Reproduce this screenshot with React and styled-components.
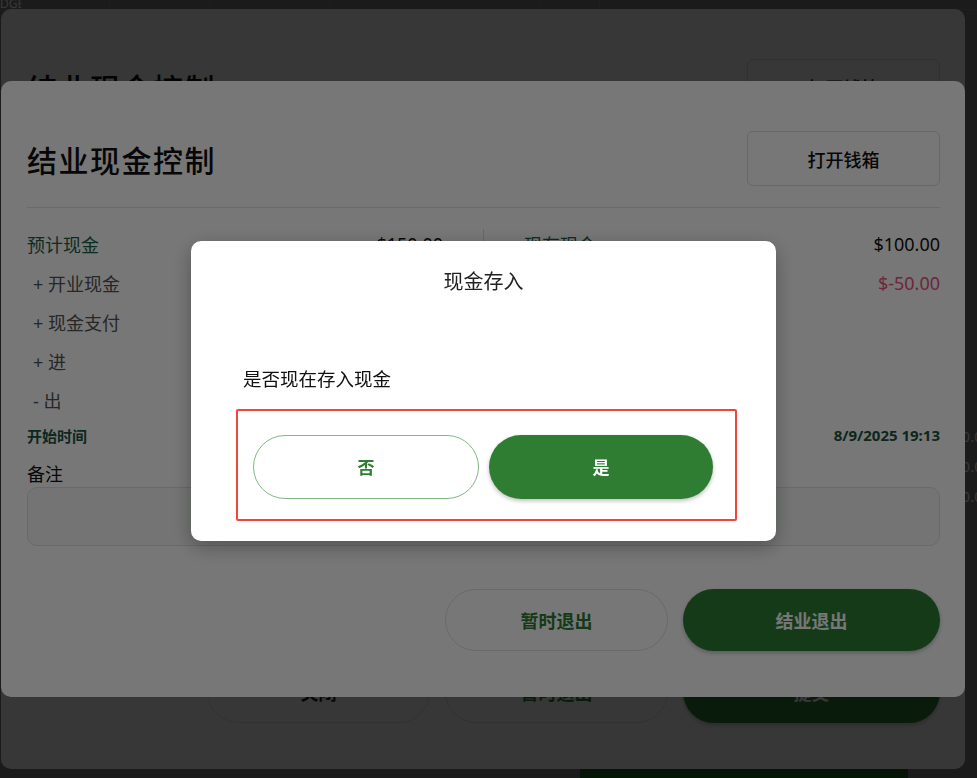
import React from 'react'
import styled, { createGlobalStyle, css } from 'styled-components'

const GlobalStyle = createGlobalStyle`
  html, body {
    margin: 0;
    padding: 0;
    height: 100%;
    overflow: hidden;
  }
  body {
    font-family: "Noto Sans", "Noto Sans CJK SC", sans-serif;
  }
  * {
    box-sizing: border-box;
  }
`;

/* ---------- page behind the modals ---------- */

const Page = styled.div`
  height: 100vh;
  background: #7c7c7c;
  color: #fff;
  display: flex;
  flex-direction: column;
`;

const TableHead = styled.div`
  display: flex;
  height: 10px;
  font-size: 12px;
  line-height: 8px;
  border-bottom: 1px solid #8a8a8a;
`;

const HeadCell = styled.div`
  width: ${p => p.$w}px;
  border-right: 1px solid #8e8e8e;
  overflow: hidden;
  white-space: nowrap;
`;

const PageBody = styled.div`
  flex: 1;
  display: flex;
  justify-content: flex-end;
`;

const SideList = styled.div`
  width: 37px;
  padding: 411px 0 0 12px;
  border-left: 1px solid #8a8a8a;
  font-size: 15px;
`;

const SideValue = styled.div`
  height: 30px;
  line-height: 30px;
  white-space: nowrap;
`;

const PageFooter = styled.div`
  height: 10px;
  display: flex;
  justify-content: flex-end;
  padding-right: 69px;
`;

const PayBar = styled.div`
  width: 328px;
  background: #1b5e20;
`;

/* ---------- modal layers ---------- */

const Layer = styled.div`
  position: fixed;
  inset: 0;
  display: flex;
  align-items: center;
  justify-content: center;
  padding-right: ${p => (p.$gutter ? p.$gutter : 11)}px;
  background: ${p => (p.$dim ? 'rgba(0, 0, 0, 0.533)' : 'transparent')};
`;

const Modal = styled.div`
  width: 964px;
  height: ${p => p.$height}px;
  background: #fff;
  border-radius: 10px;
  padding: 50px 25px 46px 26px;
  display: flex;
  flex-direction: column;
`;

const Header = styled.div`
  display: flex;
  align-items: center;
  justify-content: space-between;
  padding-bottom: 21px;
  border-bottom: 1px solid #e4e4e4;
`;

const Title = styled.h1`
  margin: 0;
  font-size: 30px;
  font-weight: 500;
  letter-spacing: 1.5px;
  color: #111;
`;

const DrawerButton = styled.button`
  width: 193px;
  height: 55px;
  border: 1px solid #dedede;
  border-radius: 6px;
  background: #fff;
  font-family: inherit;
  font-size: 18px;
  font-weight: 500;
  color: #111;
`;

const Summary = styled.div`
  display: grid;
  grid-template-columns: 1fr 1px 1fr;
  column-gap: 40px;
  padding-top: 16px;
`;

const Column = styled.div`
  display: flex;
  flex-direction: column;
`;

const VRule = styled.div`
  margin-top: 5px;
  background: #dcdcdc;
`;

const Row = styled.div`
  height: 39px;
  display: flex;
  align-items: center;
  justify-content: space-between;
  font-size: 18px;
  padding-left: ${p => (p.$indent ? '6px' : '0')};
  color: ${p => (p.$accent ? '#1f6048' : '#555')};
`;

const Amount = styled.span`
  color: ${p => (p.$negative ? '#e8537f' : '#111')};
`;

const TimeRow = styled.div`
  height: 32px;
  display: flex;
  align-items: center;
  justify-content: space-between;
  font-size: 15px;
  font-weight: 700;
  color: #1d5442;
`;

const NoteLabel = styled.div`
  margin-top: 10px;
  font-size: 18px;
  line-height: 26px;
  color: #111;
`;

const NoteBox = styled.div`
  height: 59px;
  border: 1px solid #e2e2e2;
  border-radius: 10px;
  background: #f6f9f6;
`;

const Footer = styled.div`
  margin-top: auto;
  display: flex;
  justify-content: flex-end;
  gap: 15px;
`;

const PillButton = styled.button`
  width: ${p => p.$w}px;
  height: 62px;
  border-radius: 31px;
  font-family: inherit;
  font-size: 18px;
  font-weight: 700;
  ${p =>
    p.$solid
      ? css`
          border: none;
          background: #2e7d32;
          color: #fff;
          box-shadow: 0 2px 4px rgba(0, 0, 0, 0.25);
        `
      : css`
          border: 1px solid #e2e2e2;
          background: #fff;
          color: ${p.$plain ? '#222' : '#2e7d32'};
        `}
`;

/* ---------- confirm dialog ---------- */

const Dialog = styled.div`
  width: 585px;
  background: #fff;
  border-radius: 10px;
  padding: 28px 39px 20px 45px;
  margin-top: 3px;
  box-shadow: 0 6px 20px rgba(0, 0, 0, 0.3);
`;

const DialogTitle = styled.h2`
  margin: 0 6px 0 0;
  text-align: center;
  font-size: 20px;
  font-weight: 400;
  line-height: 26px;
  color: #222;
`;

const Message = styled.p`
  margin: 71px 0 17px 7px;
  font-size: 18.5px;
  line-height: 26px;
  color: #111;
`;

const ChoiceRow = styled.div`
  display: flex;
  gap: 10px;
  padding: 24px 22px 20px 15px;
  border: 2px solid #f1453a;
  border-radius: 2px;
`;

const ChoiceButton = styled.button`
  flex: 1;
  height: 64px;
  border-radius: 32px;
  font-family: inherit;
  font-size: 17px;
  font-weight: 700;
  ${p =>
    p.$primary
      ? css`
          border: none;
          background: #2e7d32;
          color: #fff;
          box-shadow: 0 2px 4px rgba(0, 0, 0, 0.25);
        `
      : css`
          border: 1px solid #81b883;
          background: #fff;
          color: #2e7d32;
        `}
`;

const expected = [
  { label: '+ 开业现金', value: '$100.00' },
  { label: '+ 现金支付', value: '$50.00' },
  { label: '+ 进', value: '$0.00' },
  { label: '- 出', value: '$0.00' },
];

const CashControl = ({ height, buttons }) => (
  <Modal $height={height}>
    <Header>
      <Title>结业现金控制</Title>
      <DrawerButton>打开钱箱</DrawerButton>
    </Header>
    <Summary>
      <Column>
        <Row $accent>
          预计现金 <Amount>$150.00</Amount>
        </Row>
        {expected.map(item => (
          <Row $indent key={item.label}>
            {item.label} <Amount>{item.value}</Amount>
          </Row>
        ))}
      </Column>
      <VRule />
      <Column>
        <Row $accent>
          现有现金 <Amount>$100.00</Amount>
        </Row>
        <Row $accent>
          差额 <Amount $negative>$-50.00</Amount>
        </Row>
      </Column>
    </Summary>
    <TimeRow>
      <span>开始时间</span>
      <span>8/9/2025 19:13</span>
    </TimeRow>
    <NoteLabel>备注</NoteLabel>
    <NoteBox />
    <Footer>
      {buttons.map(b => (
        <PillButton key={b.text} $w={b.w} $solid={b.solid} $plain={b.plain}>
          {b.text}
        </PillButton>
      ))}
    </Footer>
  </Modal>
);

const App = () => {
  return (
    <>
      <GlobalStyle />
      <Page>
        <TableHead>
          <HeadCell $w={22}>DGE</HeadCell>
          <HeadCell $w={88} />
          <HeadCell $w={100} />
          <HeadCell $w={120} />
          <HeadCell $w={210} />
          <HeadCell $w={60} />
        </TableHead>
        <PageBody>
          <SideList>
            <SideValue>$0.00</SideValue>
            <SideValue>$0.00</SideValue>
            <SideValue>$0.00</SideValue>
          </SideList>
        </PageBody>
        <PageFooter>
          <PayBar />
        </PageFooter>
      </Page>

      <Layer>
        <CashControl
          height={760}
          buttons={[
            { text: '关闭', w: 223, plain: true },
            { text: '暂时退出', w: 223 },
            { text: '提交', w: 257, solid: true },
          ]}
        />
      </Layer>

      <Layer $dim>
        <CashControl
          height={616}
          buttons={[
            { text: '暂时退出', w: 223 },
            { text: '结业退出', w: 257, solid: true },
          ]}
        />
      </Layer>

      <Layer $dim $gutter={10}>
        <Dialog>
          <DialogTitle>现金存入</DialogTitle>
          <Message>是否现在存入现金</Message>
          <ChoiceRow>
            <ChoiceButton>否</ChoiceButton>
            <ChoiceButton $primary>是</ChoiceButton>
          </ChoiceRow>
        </Dialog>
      </Layer>
    </>
  )
}

export default App
